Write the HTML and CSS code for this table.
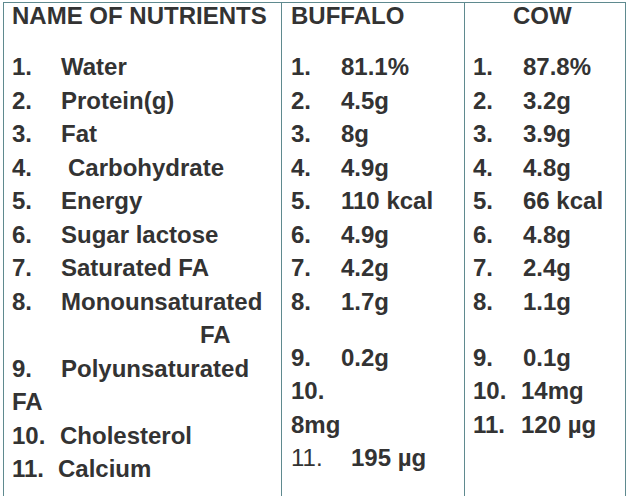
FILE: index.html
```html
<!DOCTYPE html>
<html>
<head>
<meta charset="utf-8">
<link rel="stylesheet" href="styles.css">
</head>
<body>
<div class="table">
  <div class="col col-name">
    <div class="head">NAME OF NUTRIENTS</div>
    <div class="list">
      <div class="row"><span class="n">1.</span>Water</div>
      <div class="row"><span class="n">2.</span>Protein(g)</div>
      <div class="row"><span class="n">3.</span>Fat</div>
      <div class="row"><span class="n n-56">4.</span>Carbohydrate</div>
      <div class="row"><span class="n">5.</span>Energy</div>
      <div class="row"><span class="n">6.</span>Sugar lactose</div>
      <div class="row"><span class="n">7.</span>Saturated FA</div>
      <div class="row"><span class="n">8.</span>Monounsaturated</div>
      <div class="row row-fa-right">FA</div>
      <div class="row"><span class="n">9.</span>Polyunsaturated</div>
      <div class="row">FA</div>
      <div class="row"><span class="n n-48">10.</span>Cholesterol</div>
      <div class="row"><span class="n n-46">11.</span>Calcium</div>
    </div>
  </div>
  <div class="col col-buffalo">
    <div class="head">BUFFALO</div>
    <div class="list">
      <div class="row"><span class="n">1.</span>81.1%</div>
      <div class="row"><span class="n">2.</span>4.5g</div>
      <div class="row"><span class="n">3.</span>8g</div>
      <div class="row"><span class="n">4.</span>4.9g</div>
      <div class="row"><span class="n">5.</span>110 kcal</div>
      <div class="row"><span class="n">6.</span>4.9g</div>
      <div class="row"><span class="n">7.</span>4.2g</div>
      <div class="row"><span class="n">8.</span>1.7g</div>
      <div class="row row-gap"><span class="n">9.</span>0.2g</div>
      <div class="row">10.</div>
      <div class="row">8mg</div>
      <div class="row"><span class="n n-60 light">11.</span>195 µg</div>
    </div>
  </div>
  <div class="col col-cow">
    <div class="head head-cow">COW</div>
    <div class="list">
      <div class="row"><span class="n">1.</span>87.8%</div>
      <div class="row"><span class="n">2.</span>3.2g</div>
      <div class="row"><span class="n">3.</span>3.9g</div>
      <div class="row"><span class="n">4.</span>4.8g</div>
      <div class="row"><span class="n">5.</span>66 kcal</div>
      <div class="row"><span class="n">6.</span>4.8g</div>
      <div class="row"><span class="n">7.</span>2.4g</div>
      <div class="row"><span class="n">8.</span>1.1g</div>
      <div class="row row-gap"><span class="n">9.</span>0.1g</div>
      <div class="row"><span class="n n-48">10.</span>14mg</div>
      <div class="row"><span class="n n-48">11.</span>120 µg</div>
    </div>
  </div>
</div>
</body>
</html>
```
FILE: styles.css
```css
html, body {
  margin: 0;
  padding: 0;
  background: #ffffff;
  overflow: hidden;
}

body {
  width: 628px;
  height: 496px;
  font-family: "Liberation Sans", Arial, sans-serif;
  font-weight: bold;
  font-size: 24px;
  color: #333333;
}

.table {
  margin: 2px 0 0 3px;
  width: 623px;
  height: 494px;
  box-sizing: border-box;
  display: grid;
  grid-template-columns: 277px 183px 162px;
  border-top: 1px solid #5f8a8f;
  border-left: 1px solid #5f8a8f;
  border-right: 1px solid #5f8a8f;
}

.col {
  box-sizing: border-box;
}

.col-name {
  padding-left: 8px;
}

.col-buffalo {
  border-left: 1px solid #5f8a8f;
  padding-left: 9px;
}

.col-cow {
  border-left: 1px solid #5f8a8f;
  padding-left: 8px;
}

.head {
  line-height: 26px;
  white-space: nowrap;
}

.head-cow {
  padding-left: 40px;
}

.list {
  margin-top: 21px;
}

.row {
  line-height: 33.5px;
  white-space: nowrap;
}

.n {
  display: inline-block;
  width: 49px;
}

.col-buffalo .n,
.col-cow .n {
  width: 50px;
}

.col-name .n-56 {
  width: 56px;
}

.col-name .n-48,
.col-cow .n-48 {
  width: 48px;
}

.col-name .n-46 {
  width: 46px;
}

.col-buffalo .n-60 {
  width: 60px;
}

.light {
  font-weight: normal;
}

.row-fa-right {
  padding-left: 188px;
}

.row-gap {
  margin-top: 22.5px;
}
```
